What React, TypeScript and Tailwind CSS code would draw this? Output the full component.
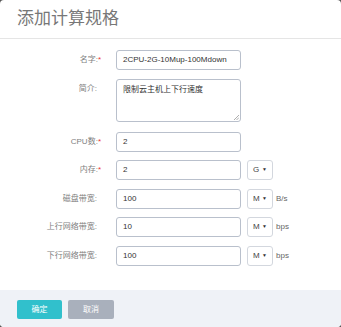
import React from "react";

const font = { fontFamily: '"Liberation Sans", "Noto Sans CJK SC", sans-serif' };

function Label({ text, req, top }: { text: string; req?: boolean; top?: boolean }) {
  return (
    <div className={`w-[101px] shrink-0 text-right text-[8px] leading-[10px] text-[#808080] ${top ? "self-start pt-[5px]" : ""}`}>
      {text}:{req ? <span className="text-[#e33]">*</span> : <span className="inline-block w-[4px]" />}
    </div>
  );
}

function Input({ value }: { value: string }) {
  return (
    <div className="ml-[15px] flex h-[20px] w-[125px] items-center rounded-[3px] border border-[#b9c0cc] pl-[6px] text-[8px] text-[#333]">
      {value}
    </div>
  );
}

function Sel({ v }: { v: string }) {
  return (
    <div className="ml-[6px] flex h-[20px] w-[26px] items-center justify-between rounded-[3px] border border-[#d3d7de] px-[5px] text-[8px] text-[#444]">
      <span>{v}</span>
      <span className="text-[5px] text-[#333]">▼</span>
    </div>
  );
}

function Row({ label, req, value, unit, suffix }: { label: string; req?: boolean; value: string; unit?: string; suffix?: string }) {
  return (
    <div className="flex h-[20px] items-center">
      <Label text={label} req={req} />
      <Input value={value} />
      {unit && <Sel v={unit} />}
      {suffix && <span className="ml-[3px] text-[8px] text-[#666]">{suffix}</span>}
    </div>
  );
}

export default function App() {
  return (
    <div className="h-[327px] w-[341px] bg-[#555]" style={font}>
      <div className="flex h-full w-full flex-col overflow-hidden rounded-[4px] bg-white">
        <div className="flex h-[39px] shrink-0 items-center border-b border-[#e5e5e5] pl-[17px] text-[17px] text-[#777]">
          添加计算规格
        </div>
        <div className="flex flex-1 flex-col gap-[8.5px] pt-[11px]">
          <Row label="名字" req value="2CPU-2G-10Mup-100Mdown" />
          <div className="mb-[1.5px] flex">
            <Label text="简介" top />
            <div className="relative ml-[15px] h-[43px] w-[125px] rounded-[3px] border border-[#b9c0cc] pl-[6px] pt-[5px] text-[8px] leading-[10px] text-[#333]">
              限制云主机上下行速度
              <svg className="absolute bottom-[1px] right-[1px]" width="5" height="5" viewBox="0 0 5 5">
                <path d="M5 0 L0 5 M5 2.5 L2.5 5" stroke="#999" strokeWidth="0.8" />
              </svg>
            </div>
          </div>
          <Row label="CPU数" req value="2" />
          <Row label="内存" req value="2" unit="G" />
          <Row label="磁盘带宽" value="100" unit="M" suffix="B/s" />
          <Row label="上行网络带宽" value="10" unit="M" suffix="bps" />
          <Row label="下行网络带宽" value="100" unit="M" suffix="bps" />
        </div>
        <div className="flex h-[37px] shrink-0 items-start gap-[6px] bg-[#eff2f7] pl-[17px] pt-[10px]">
          <div className="flex h-[19px] w-[45px] items-center justify-center rounded-[2px] bg-[#31c0cc] text-[8px] text-white">确定</div>
          <div className="flex h-[19px] w-[46px] items-center justify-center rounded-[2px] bg-[#a9b0bc] text-[8px] text-white">取消</div>
        </div>
      </div>
    </div>
  );
}
